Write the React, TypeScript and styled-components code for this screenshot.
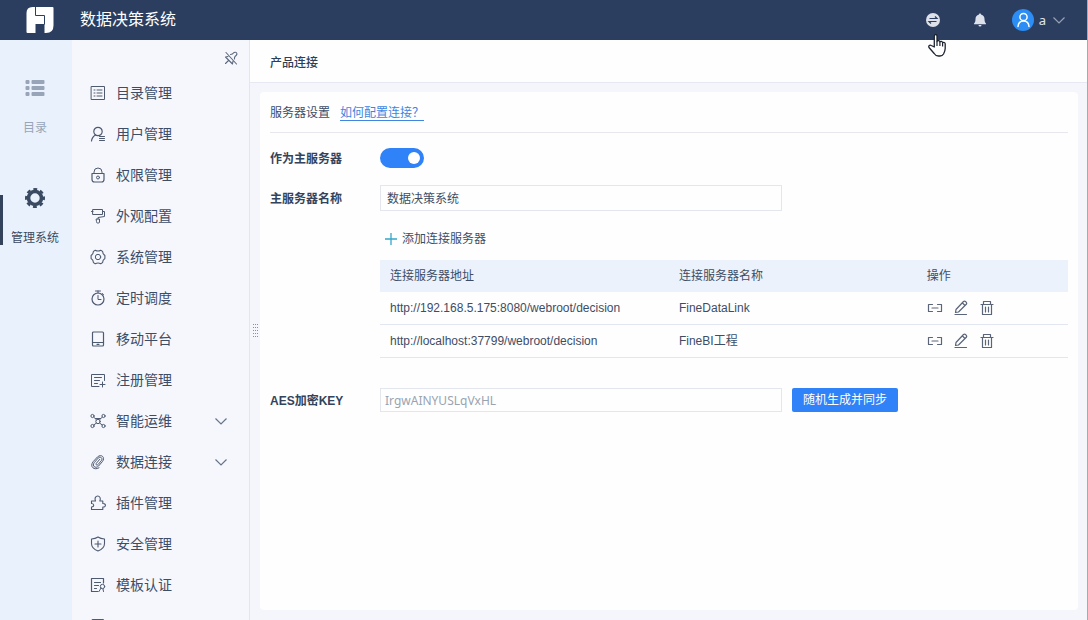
import React, { useState } from "react";
import styled, { createGlobalStyle } from "styled-components";

const GlobalStyle = createGlobalStyle`
  *, *::before, *::after { box-sizing: border-box; }
  body {
    margin: 0;
    font-family: "Liberation Sans", "Noto Sans CJK SC", sans-serif;
    font-size: 12px;
    line-height: 16px;
    color: #3d4d66;
  }
  button, input { font: inherit; color: inherit; }
`;

const Shell = styled.div`
  display: flex;
  flex-direction: column;
  height: 100vh;
  overflow: hidden;
  border-right: 1px solid #a6a9b0;
  background: #f4f6fc;
`;

const Header = styled.header`
  flex: none;
  display: flex;
  align-items: center;
  height: 40px;
  padding: 0 21px 0 26px;
  background: #2c3e5f;
  color: #e9edf5;
`;

const SystemName = styled.h1`
  flex: 1;
  margin: 0 0 0 26px;
  font-size: 16px;
  font-weight: 400;
  line-height: 24px;
  color: #fff;
`;

const HeaderTools = styled.div`
  display: flex;
  align-items: center;
  gap: 31px;
`;

const PlainButton = styled.button`
  display: inline-flex;
  align-items: center;
  padding: 0;
  border: 0;
  background: none;
  cursor: pointer;
`;

const ToolButton = styled(PlainButton)`
  position: relative;
`;

const Pointer = styled.svg`
  position: absolute;
  z-index: 2;
  top: 21px;
  left: 3px;
`;

const UserButton = styled(PlainButton)`
  gap: 5px;
  margin-left: -7px;
  color: #e2e6ee;
`;

const UserName = styled.span`
  font-family: "Noto Sans", sans-serif;
  font-size: 13px;
  padding-right: 1px;
`;

const Body = styled.div`
  flex: 1;
  display: flex;
  min-height: 0;
`;

const Rail = styled.nav`
  flex: none;
  width: 72px;
  padding-top: 38px;
  display: flex;
  flex-direction: column;
  gap: 52px;
  background: #e9f2fc;
`;

const RailLink = styled.a<{ $active?: boolean }>`
  position: relative;
  display: flex;
  flex-direction: column;
  align-items: center;
  gap: 22px;
  height: 58px;
  padding-right: 2px;
  text-decoration: none;
  color: ${(p) => (p.$active ? "#3a4a62" : "#98a5b8")};

  &::before {
    content: "";
    display: ${(p) => (p.$active ? "block" : "none")};
    position: absolute;
    left: 0;
    top: 7px;
    width: 3px;
    height: 50px;
    background: #33435c;
  }
`;

const Side = styled.nav`
  flex: none;
  width: 178px;
  overflow: hidden;
  border-right: 1px solid #e3e6f0;
  background: #f6f7fd;
`;

const PinBar = styled.div`
  display: flex;
  justify-content: flex-end;
  align-items: center;
  height: 32px;
  padding: 4px 10px 0 0;
  color: #5a677c;
`;

const MenuList = styled.ul`
  margin: 0;
  padding: 0;
  list-style: none;
`;

const MenuLink = styled.a`
  display: flex;
  align-items: center;
  gap: 10px;
  height: 41px;
  padding: 0 21px 0 18px;
  font-size: 14px;
  line-height: 20px;
  color: #3d4d66;
  text-decoration: none;

  svg {
    flex: none;
    color: #4d5a70;
  }
`;

const MenuText = styled.span`
  flex: 1;
`;

const Main = styled.main`
  position: relative;
  flex: 1;
  min-width: 0;
  display: flex;
  flex-direction: column;
`;

const Grip = styled.svg`
  position: absolute;
  left: 3px;
  top: 50%;
  margin-top: -6px;
`;

const TitleBar = styled.div`
  flex: none;
  height: 43px;
  padding: 3px 20px 0;
  display: flex;
  align-items: center;
  border-bottom: 1px solid #e6e8f2;
  background: #fefefe;
`;

const PageTitle = styled.h2`
  margin: 0;
  font-size: 12px;
  font-weight: 500;
  line-height: 16px;
  color: #2f3e57;
`;

const Panel = styled.section`
  flex: 1;
  margin: 9px 9px 10px 10px;
  padding: 0 10px;
  border-radius: 4px;
  background: #fefefe;
`;

const SectionHead = styled.div`
  display: flex;
  align-items: center;
  gap: 10px;
  height: 41px;
  padding-top: 2px;
  border-bottom: 1px solid #e6e8ee;
`;

const HelpLink = styled.a`
  color: #3f86e0;
  line-height: 16px;
  text-decoration: none;
  box-shadow: inset 0 -1px 0 #3f86e0;
`;

const Form = styled.form`
  display: flex;
  flex-direction: column;
  gap: 17px;
  padding-top: 15px;
`;

const Field = styled.div<{ $spaced?: boolean }>`
  display: flex;
  align-items: center;
  margin-top: ${(p) => (p.$spaced ? "13px" : "0")};
`;

const Label = styled.label`
  flex: none;
  width: 110px;
  padding-top: 2px;
  font-weight: 700;
  color: #34435c;
`;

const Switch = styled.input`
  appearance: none;
  position: relative;
  width: 44px;
  height: 20px;
  margin: 0;
  border-radius: 10px;
  background: #c3cad6;
  cursor: pointer;

  &::after {
    content: "";
    position: absolute;
    top: 4px;
    left: 4px;
    width: 12px;
    height: 12px;
    border-radius: 50%;
    background: #fff;
  }
  &:checked { background: #2f82f7; }
  &:checked::after { left: 28px; }
`;

const TextInput = styled.input<{ $muted?: boolean }>`
  flex: 0 1 402px;
  min-width: 0;
  height: ${(p) => (p.$muted ? "24px" : "26px")};
  padding: ${(p) => (p.$muted ? "0 4px" : "0 6px 2px")};
  border: 1px solid #e4e6ee;
  border-radius: 0;
  background: transparent;
  outline: none;
  font-family: ${(p) => (p.$muted ? '"Noto Sans", "Noto Sans CJK SC", sans-serif' : "inherit")};
  color: ${(p) => (p.$muted ? "#9aa3b0" : "#3d4d66")};
`;

const Servers = styled.div`
  display: flex;
  flex-direction: column;
  align-items: flex-start;
  gap: 13px;
  padding: 3px 0 0 110px;
`;

const AddButton = styled(PlainButton)`
  gap: 5px;
  margin-left: 5px;
`;

const Table = styled.table`
  width: 100%;
  border-collapse: separate;
  border-spacing: 0;
  table-layout: fixed;
`;

const HeadCell = styled.th<{ $width: string }>`
  width: ${(p) => p.$width};
  height: 32px;
  padding: 0 10px;
  background: #ebf2fc;
  font-weight: 400;
  text-align: left;
`;

const Cell = styled.td`
  height: 33px;
  padding: 0 10px;
  border-bottom: 1px solid #e2e5f2;
`;

const Actions = styled.div`
  display: flex;
  gap: 10px;
  color: #5a6579;
`;

const ActionButton = styled(PlainButton)`
  color: inherit;
`;

const PrimaryButton = styled.button`
  height: 24px;
  margin-left: 10px;
  padding: 0 11px 1px;
  border: 0;
  border-radius: 2px;
  background: #2f82f7;
  color: #fff;
  cursor: pointer;
`;

type IconProps = { children: React.ReactNode; size?: number };

const Icon = ({ children, size = 16 }: IconProps) => (
  <svg
    width={size}
    height={size}
    viewBox="0 0 16 16"
    fill="none"
    stroke="currentColor"
    strokeLinecap="round"
    strokeLinejoin="round"
    aria-hidden="true"
  >
    {children}
  </svg>
);

const Chevron = ({ color = "#66748a" }: { color?: string }) => (
  <svg width="14" height="14" viewBox="0 0 14 14" fill="none" stroke={color} strokeWidth="1.2" aria-hidden="true">
    <path d="M1.5 4.5 7 10l5.5-5.5" />
  </svg>
);

const menu: { label: string; icon: React.ReactNode; expandable?: boolean }[] = [
  {
    label: "目录管理",
    icon: <path d="M1.500 1.500h13v13h-13zM4 5h1M4 8h1M4 11h1M7 5h5M7 8h5M7 11h5" />,
  },
  {
    label: "用户管理",
    icon: (
      <>
        <circle cx="8" cy="5.500" r="4.200" strokeWidth="1.200" />
        <path d="M5.500 9C3 10.500 1.800 12 1.500 15" strokeWidth="1.200" />
        <path d="M9.500 10.500h5M9.500 12.500h5M9.500 14.500h5" />
      </>
    ),
  },
  {
    label: "权限管理",
    icon: (
      <>
        <path d="M4 6.500V5a4 4 0 0 1 8 0v1.500" />
        <path d="M2 6.500h12v6a2.500 2.500 0 0 1-2.500 2.500h-7A2.500 2.500 0 0 1 2 12.500z" strokeWidth="1.200" />
        <circle cx="8" cy="10.500" r="1.500" />
      </>
    ),
  },
  {
    label: "外观配置",
    icon: (
      <>
        <path d="M3 1.500h9.500v5H3zM3 3.500H1.500M12.500 3.500h2v5L8 9.500v1.500" />
        <path d="M6.500 11h3v3a1 1 0 0 1-1 1h-1a1 1 0 0 1-1-1z" />
      </>
    ),
  },
  {
    label: "系统管理",
    icon: (
      <>
        <path
          d="M5.300 1.200Q8 2.800 10.700 1.200L12.600 2.400Q12.500 5 14.900 6.500V9.500Q12.500 11 12.600 13.600L10.700 14.800Q8 13.200 5.300 14.800L3.400 13.600Q3.500 11 1.100 9.500V6.500Q3.500 5 3.400 2.400z"
          strokeWidth="1.100"
        />
        <circle cx="8" cy="8" r="2.700" />
      </>
    ),
  },
  {
    label: "定时调度",
    icon: (
      <>
        <circle cx="8" cy="9" r="6" strokeWidth="1.200" />
        <path d="M5.500 1h5M8 1v2M8 5.500V9.500h3M12.500 3.500l1 1" />
      </>
    ),
  },
  {
    label: "移动平台",
    icon: (
      <>
        <rect x="2.500" y="1" width="11" height="14" rx="1" strokeWidth="1.200" />
        <path d="M2.500 11.500h11M7 13.300h2" strokeWidth="1.200" />
      </>
    ),
  },
  {
    label: "注册管理",
    icon: <path d="M14.500 8.500V2.500h-13v12H9M4.500 5.500h7M4.500 8.500h5M4.500 11.500h3M12.500 10v5M10 12.500h5" />,
  },
  {
    label: "智能运维",
    expandable: true,
    icon: (
      <>
        <circle cx="2.500" cy="3" r="1.600" />
        <circle cx="13.500" cy="3" r="1.600" />
        <circle cx="2.500" cy="13" r="1.600" />
        <circle cx="13.500" cy="13" r="1.600" />
        <circle cx="8" cy="8.500" r="2.200" />
        <path d="m3.800 4.200 2.600 2.600M12.200 4.200 9.600 6.800M3.800 11.900l2.500-1.700M12.200 11.900 9.700 10.200M5.500 5.500h5" />
      </>
    ),
  },
  {
    label: "数据连接",
    expandable: true,
    icon: (
      <path
        d="M9.800 5.300 6.300 9.300c-1 1.300.6 2.500 1.700 1.300l3.300-3.900c2-2.600-1-4.800-3.100-2.600L4.300 8.500c-2.700 3.500 1.200 6.500 4.200 3.600l3.900-4.500c3.200-4-.9-8.200-5-4.600L3.200 7.600c-4 5 1 9.300 5.800 6.200"
        strokeWidth="1"
      />
    ),
  },
  {
    label: "插件管理",
    icon: (
      <path
        d="M1.500 14.500v-2.500c3-.2 3-3.300 0-3.500V6H5.500C4.300 3 5.800 1 7.700 1s3.300 2 2.100 5h3v2.500c3.500-.3 3.500 4 0 3.500v2.500z"
        strokeWidth="1.100"
      />
    ),
  },
  {
    label: "安全管理",
    icon: (
      <path
        d="M8 1c2 1.300 4 1.800 6.500 2v4.500c0 3.500-2.500 6-6.500 7.500-4-1.500-6.500-4-6.500-7.500V3C4 2.800 6 2.300 8 1zM8 5v6M5 8h6"
        strokeWidth="1.100"
      />
    ),
  },
  {
    label: "模板认证",
    icon: (
      <>
        <path d="M13.500 6V1.500h-12v13H8M4.500 5.500h6M4.500 8.500h4M4.500 11.500h2" strokeWidth="1.200" />
        <circle cx="12.500" cy="9.500" r="2.200" />
        <path d="m11 11-2 3.500M13 12l.5 2.500" />
      </>
    ),
  },
  { label: "", icon: <path d="M2.500 1.500h11v13h-11z" /> },
];

const servers = [
  { url: "http://192.168.5.175:8080/webroot/decision", name: "FineDataLink" },
  { url: "http://localhost:37799/webroot/decision", name: "FineBI工程" },
];

const Logo = () => (
  <svg width="28" height="28" viewBox="0 0 28 28" aria-hidden="true">
    <path
      d="M6.500 1h20q1 0 1 1v17.500q0 7.500-7.500 7.500h-1.500v-9h-9v9H1.500q-1 0-1-1V7Q.5 1 6.500 1z"
      fill="#fff"
    />
    <path d="M9.500 1v8.500h9v9" fill="none" stroke="#2c3e5f" strokeWidth="1" />
  </svg>
);

const HandPointer = () => (
  <Pointer width="20" height="24" viewBox="0 0 20 24" aria-hidden="true">
    <path
      d="M6.300 14V3c0-2 2.700-2 2.700 0v5.500c.5-1.200 2.700-1 2.900.4.700-.9 2.500-.6 2.700.8.900-.8 2.600-.2 2.600 1.300v4.500c0 2.200-.7 3.500-1.700 5.500-.8 1.500-2 2-3.500 2h-1.500c-2 0-3.300-.8-4.300-2.500L1 14.500c-.8-1.800.8-3 2.300-2z"
      fill="#fff"
      stroke="#1d2430"
      strokeWidth="1.300"
      strokeLinejoin="round"
    />
    <path d="M9 8.500V13M11.900 9v4M14.600 10v3.500" stroke="#1d2430" strokeWidth="1.200" />
  </Pointer>
);

export default function App() {
  const [primary, setPrimary] = useState(true);
  const [name, setName] = useState("数据决策系统");
  const [key, setKey] = useState("IrgwAINYUSLqVxHL");

  return (
    <>
      <GlobalStyle />
      <Shell>
        <Header>
          <Logo />
          <SystemName>数据决策系统</SystemName>
          <HeaderTools>
            <ToolButton type="button" aria-label="切换">
              <svg width="16" height="16" viewBox="0 0 16 16" aria-hidden="true">
                <circle cx="8" cy="8" r="7" fill="#dde1ea" />
                <path d="M4.500 6.500h7.500L10 4.500M11.500 9.500H4l2 2" fill="none" stroke="#2c3e5f" strokeWidth="1.200" />
              </svg>
              <HandPointer />
            </ToolButton>
            <ToolButton type="button" aria-label="消息">
              <svg width="16" height="16" viewBox="0 0 16 16" fill="#dde1ea" aria-hidden="true">
                <path d="M8 1.500c.8 0 1 .5 1 1 2.500.6 3.500 2.500 3.500 4.500 0 2.500.5 3.500 1.500 4.500v.8H2v-.8C3 10.500 3.500 9.500 3.500 7c0-2 1-3.900 3.500-4.500 0-.5.2-1 1-1zM6.500 13h3a1.500 1.500 0 0 1-3 0z" />
              </svg>
            </ToolButton>
            <UserButton type="button">
              <svg width="22" height="22" viewBox="0 0 22 22" aria-hidden="true">
                <circle cx="11" cy="11" r="11" fill="#2b8df5" />
                <g fill="none" stroke="#fff" strokeWidth="1.500" strokeLinecap="round">
                  <circle cx="11.500" cy="8" r="3.600" />
                  <path d="M6 17.500c.3-3.500 2.500-5.500 5.500-5.500s5.200 2 5.500 5.500" />
                </g>
              </svg>
              <UserName>a</UserName>
              <Chevron color="#97a2b5" />
            </UserButton>
          </HeaderTools>
        </Header>

        <Body>
          <Rail>
            <RailLink href="#catalog">
              <svg width="20" height="20" viewBox="0 0 20 20" fill="currentColor" aria-hidden="true">
                {[2, 8, 14].map((y) => (
                  <g key={y}>
                    <rect x="0.500" y={y} width="4" height="4" rx="1" />
                    <rect x="6.500" y={y} width="13" height="4" rx="1" />
                  </g>
                ))}
              </svg>
              目录
            </RailLink>
            <RailLink href="#system" $active>
              <svg width="20" height="20" viewBox="0 0 20 20" fill="none" stroke="currentColor" aria-hidden="true">
                <circle cx="10" cy="10" r="6.500" strokeWidth="3.600" />
                <circle cx="10" cy="10" r="8.900" strokeWidth="2.200" strokeDasharray="3.900 3.090" strokeDashoffset="1.950" />
              </svg>
              管理系统
            </RailLink>
          </Rail>

          <Side>
            <PinBar>
              <ActionButton type="button" aria-label="取消固定">
                <Icon>
                  <path
                    d="M3 2.500 13.500 14M7.500 4.500Q9.500 4.500 11 2.500q2.500-1 3 1.500-.5 1.500-2 2.500-.8 1.500-.5 2.500M5 6.500 2.500 7l7 7 .5-3M5.500 10.500 2.500 13.500"
                    strokeWidth="1.100"
                  />
                </Icon>
              </ActionButton>
            </PinBar>
            <MenuList>
              {menu.map((item) => (
                <li key={item.label}>
                  <MenuLink href="#menu">
                    <Icon>{item.icon}</Icon>
                    <MenuText>{item.label}</MenuText>
                    {item.expandable && <Chevron />}
                  </MenuLink>
                </li>
              ))}
            </MenuList>
          </Side>

          <Main>
            <TitleBar>
              <PageTitle>产品连接</PageTitle>
            </TitleBar>
            <Panel>
              <SectionHead>
                <span>服务器设置</span>
                <HelpLink href="#help">如何配置连接？</HelpLink>
              </SectionHead>
              <Form onSubmit={(e) => e.preventDefault()}>
                <Field>
                  <Label htmlFor="primary">作为主服务器</Label>
                  <Switch
                    id="primary"
                    type="checkbox"
                    role="switch"
                    checked={primary}
                    onChange={(e) => setPrimary(e.target.checked)}
                  />
                </Field>
                <Field>
                  <Label htmlFor="name">主服务器名称</Label>
                  <TextInput id="name" value={name} onChange={(e) => setName(e.target.value)} />
                </Field>
                <Servers>
                  <AddButton type="button">
                    <svg width="12" height="12" viewBox="0 0 12 12" stroke="#35a7c8" strokeWidth="1.300" aria-hidden="true">
                      <path d="M6 0v12M0 6h12" />
                    </svg>
                    添加连接服务器
                  </AddButton>
                  <Table>
                    <thead>
                      <tr>
                        <HeadCell $width="42%">连接服务器地址</HeadCell>
                        <HeadCell $width="36%">连接服务器名称</HeadCell>
                        <HeadCell $width="22%">操作</HeadCell>
                      </tr>
                    </thead>
                    <tbody>
                      {servers.map((s) => (
                        <tr key={s.url}>
                          <Cell>{s.url}</Cell>
                          <Cell>{s.name}</Cell>
                          <Cell>
                            <Actions>
                              <ActionButton type="button" aria-label="测试连接">
                                <Icon>
                                  <path d="M5.500 4.500h-4v7h4M10.500 4.500h4v7h-4M5 8h6" strokeWidth="1.200" />
                                </Icon>
                              </ActionButton>
                              <ActionButton type="button" aria-label="编辑">
                                <Icon>
                                  <path
                                    d="M2.500 12.500 3 9.500l7.500-8q1-.8 2 0l.8.8q.8 1 0 2l-7.800 7.700zM9.500 3l2.500 2.500M2 14.500h11.500"
                                    strokeWidth="1.200"
                                  />
                                </Icon>
                              </ActionButton>
                              <ActionButton type="button" aria-label="删除">
                                <Icon>
                                  <path
                                    d="M2 4.500h12M4.500 4.500v-3h7v3M3.500 4.500v10h9v-10M6.500 7v5M9.500 7v5"
                                    strokeWidth="1.200"
                                  />
                                </Icon>
                              </ActionButton>
                            </Actions>
                          </Cell>
                        </tr>
                      ))}
                    </tbody>
                  </Table>
                </Servers>
                <Field $spaced>
                  <Label htmlFor="key">AES加密KEY</Label>
                  <TextInput id="key" $muted value={key} onChange={(e) => setKey(e.target.value)} />
                  <PrimaryButton type="button">随机生成并同步</PrimaryButton>
                </Field>
              </Form>
            </Panel>
            <Grip width="6" height="13" viewBox="0 0 6 13" fill="#8590a3" aria-hidden="true">
              {[0, 3, 6, 9, 12].map((y) => (
                <g key={y}>
                  <rect x="0" y={y} width="1" height="1" />
                  <rect x="2" y={y} width="1" height="1" />
                  <rect x="4" y={y} width="1" height="1" />
                </g>
              ))}
            </Grip>
          </Main>
        </Body>
      </Shell>
    </>
  );
}
